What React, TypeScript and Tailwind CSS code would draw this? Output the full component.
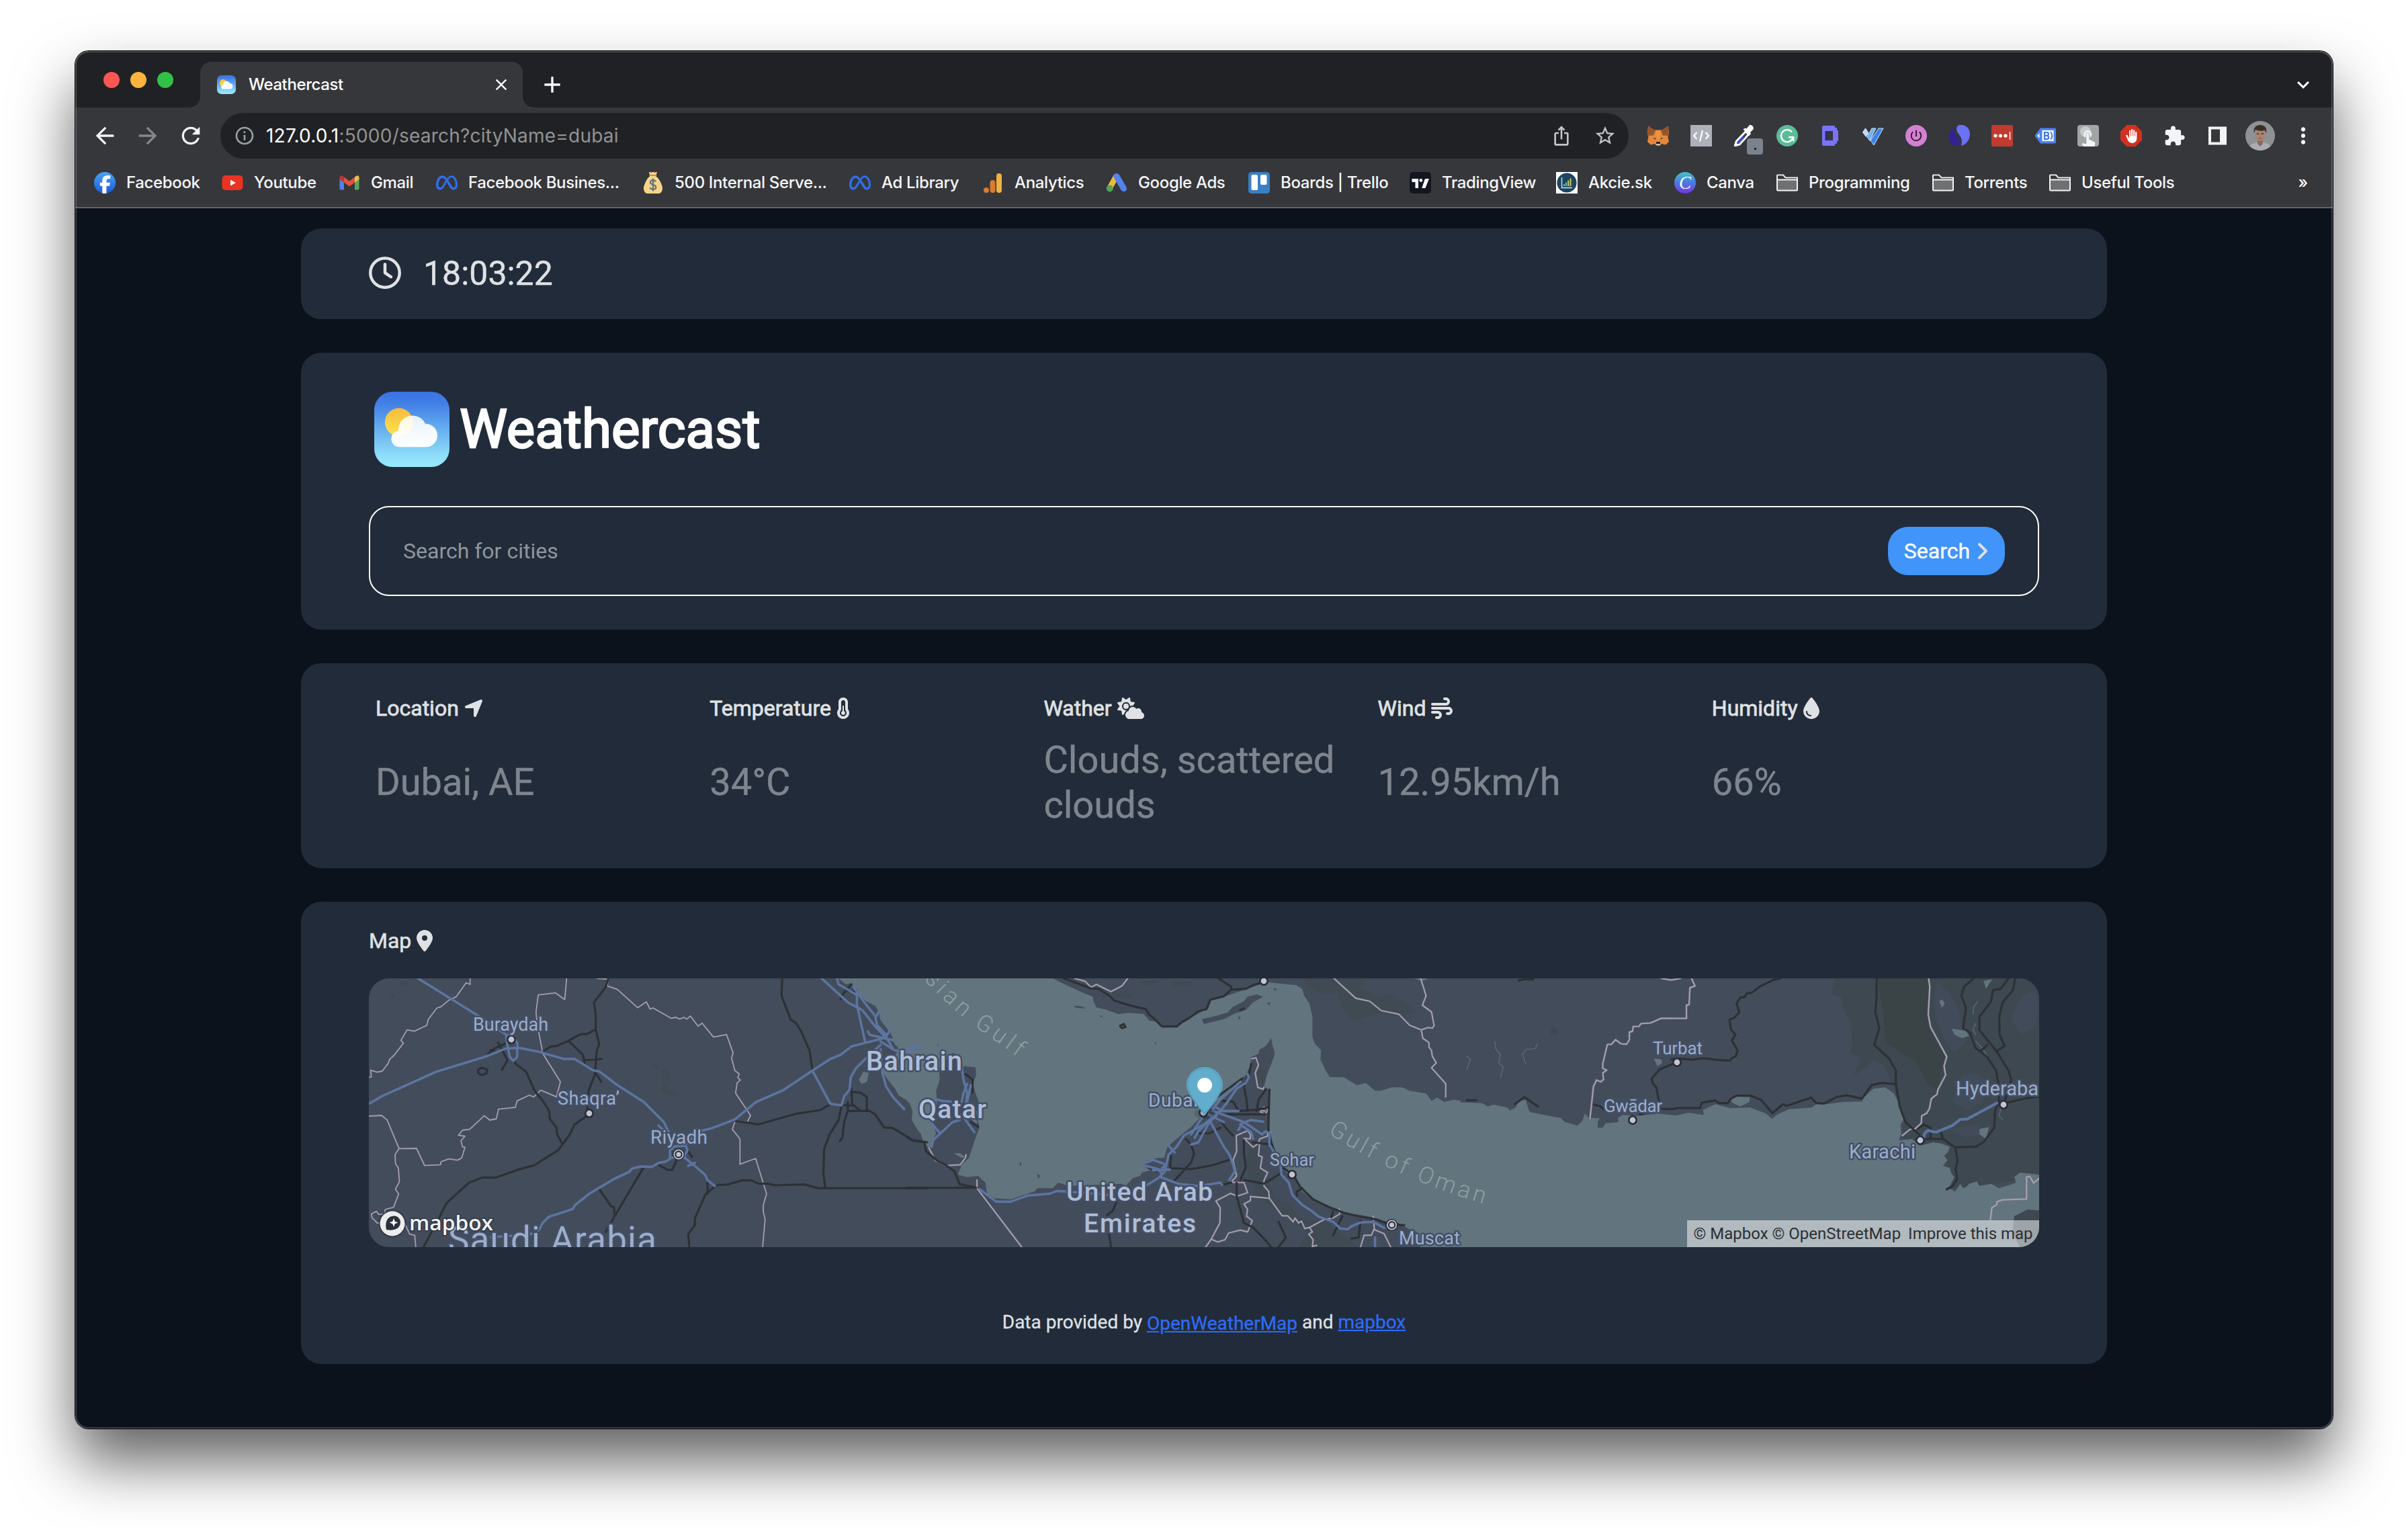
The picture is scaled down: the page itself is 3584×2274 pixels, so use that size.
import type { ReactNode } from 'react';
import { FaAngleRight, FaCloudSun, FaDroplet, FaFacebookF, FaLocationDot, FaMeta, FaRegClock, FaTemperatureHalf, FaWind } from 'react-icons/fa6';
import {
  MdAdd,
  MdArrowBack,
  MdArrowForward,
  MdBackHand,
  MdClose,
  MdExtension,
  MdInfoOutline,
  MdIosShare,
  MdKeyboardArrowDown,
  MdMoreVert,
  MdPowerSettingsNew,
  MdRefresh,
  MdStarBorder,
  MdTouchApp,
} from 'react-icons/md';

/* ---------- brand ---------- */

function WeatherLogo({ id, className }: { id: string; className: string }) {
  return (
    <svg viewBox="0 0 112 112" className={className}>
      <defs>
        <linearGradient id={`${id}-sky`} x1="0" y1="0" x2="0" y2="1">
          <stop offset="0" stopColor="#3a72e5" />
          <stop offset="0.15" stopColor="#417fe6" />
          <stop offset="0.85" stopColor="#8edef9" />
          <stop offset="1" stopColor="#98e8fd" />
        </linearGradient>
        <linearGradient id={`${id}-sun`} x1="0" y1="0" x2="0" y2="1">
          <stop offset="0" stopColor="#f6bb3e" />
          <stop offset="1" stopColor="#fde44c" />
        </linearGradient>
        <linearGradient id={`${id}-cloud`} x1="0" y1="0" x2="0" y2="1">
          <stop offset="0" stopColor="#fff" stopOpacity="0.86" />
          <stop offset="1" stopColor="#fff" stopOpacity="0.98" />
        </linearGradient>
      </defs>
      <rect width="112" height="112" rx="27" fill={`url(#${id}-sky)`} />
      <circle cx="36.8" cy="45.2" r="20.9" fill={`url(#${id}-sun)`} />
      <path
        d="M37.5 82.3A12.2 12.2 0 0 1 36 58A21 21 0 0 1 76 47.7A17.3 17.3 0 0 1 77.5 82.3Z"
        fill={`url(#${id}-cloud)`}
      />
    </svg>
  );
}

/* ---------- bookmark icons ---------- */

const icon = 'block h-8 w-8 shrink-0';

function FacebookIcon() {
  return (
    <span className="flex h-8 w-8 shrink-0 items-end justify-center overflow-hidden rounded-full bg-linear-to-b from-[#4aa3f7] to-[#2158d6]">
      <FaFacebookF className="h-[27px] w-[17px] text-white" />
    </span>
  );
}

function YoutubeIcon() {
  return (
    <svg viewBox="0 0 32 32" className={icon}>
      <rect x="0.5" y="5" width="31" height="22" rx="5" fill="#e93323" />
      <path d="M13 11.5v9l8-4.5z" fill="#fff" />
    </svg>
  );
}

function GmailIcon() {
  return (
    <svg viewBox="0 0 32 32" className={icon}>
      <path d="M1.500 9v15.500a2 2 0 0 0 2 2H8V13z" fill="#4d82ee" />
      <path d="M30.500 9v15.500a2 2 0 0 1-2 2H24V13z" fill="#57a55a" />
      <path d="M24 7.500l2-1.500c2-1.500 4.500-.3 4.500 2.500v2.500L24 15.500z" fill="#f2bd42" />
      <path d="M8 7.500L6 6C4 4.500 1.500 5.700 1.500 8.500V11L8 15.500z" fill="#b8372a" />
      <path d="M8 7.500l8 6 8-6v8l-8 6-8-6z" fill="#e0513f" />
    </svg>
  );
}

function MetaIcon() {
  return <FaMeta className="block h-8 w-8 shrink-0 text-[#2e6ff0]" />;
}

function MoneyBagIcon() {
  return (
    <svg viewBox="0 0 32 32" className={icon}>
      <path
        d="M10 0h2l1 1 2-1h2l2 1 1-1h2l-1.500 4.500v2c4 3 7 8 9 14.500 1.500 5-.5 11-5.500 11H8c-5 0-7-6-5.500-11C4.500 14.500 7 9.500 11 6.500v-2z"
        fill="#f6d588"
      />
      <path d="M10.500 4h11v1.800h-11z" fill="#c9804f" />
      <path
        d="M20 14.500c-.8-1.600-2.200-2.300-4-2.300-2.300 0-4 1.200-4 3.200 0 4.700 8.300 2.400 8.300 7 0 2.100-1.900 3.300-4.300 3.300-2.100 0-3.700-.9-4.400-2.600M16 9.700v18.600"
        fill="none"
        stroke="#64707c"
        strokeWidth="2.200"
      />
    </svg>
  );
}

function AnalyticsIcon() {
  return (
    <svg viewBox="0 0 32 32" className={icon}>
      <rect x="21" y="2" width="8" height="29" rx="4" fill="#f0b23e" />
      <rect x="11.500" y="12" width="8" height="19" rx="4" fill="#d97b33" />
      <circle cx="6" cy="27" r="4" fill="#d97b33" />
    </svg>
  );
}

function AdsIcon() {
  return (
    <svg viewBox="0 0 32 32" className={icon}>
      <path d="M15 7L5.500 24" stroke="#efb93a" strokeWidth="8.500" strokeLinecap="round" />
      <path d="M16 6.500L26.500 24.500" stroke="#5384ed" strokeWidth="9" strokeLinecap="round" />
      <circle cx="5.800" cy="24.500" r="5" fill="#55a456" />
    </svg>
  );
}

function TrelloIcon() {
  return (
    <svg viewBox="0 0 32 32" className={icon}>
      <rect width="32" height="32" rx="4.500" fill="#3a7fc4" />
      <rect x="4.500" y="4" width="9.500" height="23" rx="2" fill="#fff" />
      <rect x="18" y="4" width="9.500" height="15" rx="2" fill="#fff" />
    </svg>
  );
}

function TradingViewIcon() {
  return (
    <svg viewBox="0 0 32 32" className={icon}>
      <rect width="32" height="32" rx="5" fill="#14161f" />
      <path d="M3.500 10h9.500v14H8.500V15h-5z" fill="#fff" />
      <circle cx="16.800" cy="12.400" r="2.400" fill="#fff" />
      <path d="M23 10h6l-5.600 14h-5.200z" fill="#fff" />
    </svg>
  );
}

function AkcieIcon() {
  return (
    <svg viewBox="0 0 32 32" className={icon}>
      <rect width="32" height="32" fill="#fff" />
      <circle cx="16" cy="16" r="14.600" fill="#1c4560" />
      <path d="M8.500 8v15.500h15.500" fill="none" stroke="#d8e4ea" strokeWidth="1.400" />
      <path d="M12 21v-3" stroke="#63c3d8" strokeWidth="2" />
      <path d="M15 21v-5.500" stroke="#6fc08c" strokeWidth="2" />
      <path d="M18.200 21v-8.500" stroke="#c8cf6a" strokeWidth="2" />
      <path d="M21.500 21V9.500" stroke="#e2c45e" strokeWidth="2" />
    </svg>
  );
}

function CanvaIcon() {
  return (
    <span className="flex h-8 w-8 shrink-0 items-center justify-center rounded-full bg-linear-to-b from-[#45c1cc] via-[#4a78e0] to-[#6f2be6]">
      <span className="font-['Liberation_Serif'] text-[27px] leading-none text-white italic">C</span>
    </span>
  );
}

function FolderIcon() {
  return (
    <svg viewBox="0 0 32 32" className={icon}>
      <path d="M1 26.500V5.500a1 1 0 0 1 1-1h8l3.500 4H31v18a1 1 0 0 1-1 1H2a1 1 0 0 1-1-1z" fill="#6f7072" stroke="#f1f3f4" strokeWidth="2" />
      <path d="M2 5.500h7.500l3.500 4h17v2H2z" fill="#36373b" />
      <path d="M1 11.500h30" stroke="#f1f3f4" strokeWidth="2" />
    </svg>
  );
}

/* ---------- extension icons ---------- */

function FoxIcon() {
  return (
    <svg viewBox="0 0 32 32" className={icon}>
      <path d="M1 1.500l9 6h12l9-6 1 12-1.500 4L32 25l-5 4.500-6-1.500-2 2.500h-6L11 28l-6 1.500L0 25l1.500-7.500L0 13.500z" fill="#e5883a" />
      <path d="M1 1.500L12 8 9 15.500l-8 .5-1-2.500 1-4z" fill="#95552b" />
      <path d="M31 1.500L20 8l3 7.500 8 .5 1-2.500-1-4z" fill="#95552b" />
      <path d="M12 8h8l-2.500 13h-3z" fill="#ec9344" />
      <path d="M8.500 19l3.500.5.5 2.500zM23.500 19l-3.500.5-.5 2.500z" fill="#2a3540" />
      <path d="M12.500 25h7l-.5 4-1.500 1.500h-3L13 29z" fill="#c9bfb5" />
      <path d="M13.200 25h5.600l.4 3h-6.400z" fill="#1f2226" />
    </svg>
  );
}

function CodeIcon() {
  return (
    <svg viewBox="0 0 32 32" className={icon}>
      <rect width="32" height="32" fill="#aeb1ba" />
      <path d="M9.500 11L5 16l4.500 5M22.500 11l4.500 5-4.500 5M18 8l-4 16.500" fill="none" stroke="#fff" strokeWidth="2.200" />
    </svg>
  );
}

function EyedropperIcon() {
  return (
    <span className="relative block h-8 w-8">
      <svg viewBox="0 0 32 32" className={icon}>
        <path d="M18.500 9.500L4.500 24l-2 6.500L9 29l13.500-15z" fill="#36373b" stroke="#fff" strokeWidth="3.200" strokeLinejoin="round" />
        <path d="M13 17.500h5L8.500 27.500 5.500 28l.5-3.500z" fill="#3d4fd0" />
        <path d="M14.500 6.500l3-2 2 1 4-5c3-2 8 3 6 6l-4.500 4.500 1 2-2.500 3z" fill="#fff" />
      </svg>
      <span className="absolute top-5 left-5 flex h-6 w-6 items-center justify-center rounded bg-[#7c828d]">
        <span className="mt-1.5 h-[3px] w-[3px] bg-[#222]" />
      </span>
    </span>
  );
}

function GrammarlyIcon() {
  return (
    <svg viewBox="0 0 32 32" className={icon}>
      <circle cx="16" cy="16" r="16" fill="#5bbd98" />
      <path d="M23 10.500A9 9 0 1 0 24.500 19M18 18.300h7.200v6" fill="none" stroke="#fff" strokeWidth="2.400" />
    </svg>
  );
}

function DIcon() {
  return (
    <svg viewBox="0 0 32 32" className={icon}>
      <path d="M4 3.500A2.500 2.500 0 0 1 6.500 1H23v3h3v4h2v16h-2v4h-3v3H6.500A2.500 2.500 0 0 1 4 28.500z" fill="#7a73f5" />
      <rect x="11" y="9" width="9" height="14" fill="#36373b" />
      <rect x="8.500" y="9" width="3" height="14" fill="#2b2b73" />
    </svg>
  );
}

function StripesIcon() {
  return (
    <svg viewBox="0 0 32 32" className={icon}>
      <path d="M4.500 5L9 12 5.500 17.500.5 11z" fill="#b7dcf7" stroke="#d9ecfb" strokeWidth="1" />
      <path d="M14 5h6L11 23.500 7 18z" fill="#6db1f2" stroke="#cfe5fa" strokeWidth="1" />
      <path d="M24 5h7L17 30l-5-7z" fill="#3b82ee" stroke="#cfe5fa" strokeWidth="1" />
    </svg>
  );
}

function PowerIcon() {
  return (
    <span className="flex h-8 w-8 items-center justify-center rounded-full bg-[#d580d3]">
      <MdPowerSettingsNew className="h-[22px] w-[22px] text-[#26141f]" />
    </span>
  );
}

function SwirlIcon() {
  return (
    <svg viewBox="0 0 32 32" className={icon}>
      <path d="M9 3C-2 10-3 25 9 31c8 2 10-5 6-11C10 14 7 9 9 3z" fill="#32238f" />
      <path d="M16 0c-5 2-5 8-1 13 5 6 6 11 4 18 11-3 16-16 11-25C27 1 21-1 16 0z" fill="#6a72f6" />
    </svg>
  );
}

function PasswordIcon() {
  return (
    <svg viewBox="0 0 32 32" className={icon}>
      <rect width="32" height="32" rx="2.500" fill="#c03b2f" />
      <circle cx="6" cy="16" r="2.600" fill="#fff" />
      <circle cx="13.500" cy="16" r="2.600" fill="#fff" />
      <circle cx="21" cy="16" r="2.600" fill="#fff" />
      <path d="M27.500 10v12" stroke="#fff" strokeWidth="1.400" />
    </svg>
  );
}

function TagIcon() {
  return (
    <svg viewBox="0 0 32 32" className={icon}>
      <path d="M9 4.500h21a2 2 0 0 1 2 2v19a2 2 0 0 1-2 2H9L1 17v-2z" fill="#4b84ee" />
      <path d="M7.500 12.500v7L4 16z" fill="#fff" />
      <rect x="11.500" y="8" width="17" height="16" fill="#fff" />
      <path d="M15 11h3.500a2.400 2.400 0 0 1 0 4.800H15zM15 15.800h4a2.700 2.700 0 0 1 0 5.300h-4z" fill="none" stroke="#3f75dd" strokeWidth="2.200" />
      <path d="M24 10.500c3 2.500 3 8.500 0 11" fill="none" stroke="#3f75dd" strokeWidth="2" />
    </svg>
  );
}

function TouchIcon() {
  return (
    <span className="relative flex h-8 w-8 items-end justify-center overflow-hidden rounded bg-[#a3a5a5]">
      <span className="absolute top-0.5 left-1 h-4 w-4 rounded-full bg-[#c9cbcb]" />
      <MdTouchApp className="relative -mb-1 h-8 w-8 text-[#eef4fa]" />
    </span>
  );
}

function BlockIcon() {
  return (
    <span className="relative flex h-8 w-8 items-center justify-center">
      <svg viewBox="0 0 32 32" className="absolute inset-0 h-8 w-8">
        <path d="M9.500 0h13L32 9.500v13L22.500 32h-13L0 22.500v-13z" fill="#d3301f" />
      </svg>
      <MdBackHand className="relative h-[23px] w-[21px] text-white" />
    </span>
  );
}

function SidePanelIcon() {
  return (
    <svg viewBox="0 0 32 32" className={icon}>
      <rect x="3" y="2.500" width="27" height="27" fill="#f1f3f4" />
      <rect x="7" y="6.500" width="13" height="19" fill="#36373b" />
    </svg>
  );
}

function Avatar() {
  return (
    <svg viewBox="0 0 44 44" className="block h-11 w-11 overflow-hidden rounded-full">
      <rect width="44" height="44" fill="#8f9294" />
      <path d="M4 44c1-8 7-11 13-12h10c6 1 12 4 13 12z" fill="#a9acb3" />
      <path d="M18 26h8v8l-4 4-4-4z" fill="#8d6a59" />
      <ellipse cx="22" cy="20" rx="7.500" ry="10" fill="#a88371" />
      <path d="M13 18c-2-8 3-12 9-12s11 4 9 12l-2-4c-4 1-10 1-14-1z" fill="#3b2e27" />
      <path d="M17 19h3.500M23.500 19H27" stroke="#4a342a" strokeWidth="1.400" />
      <path d="M20 26h4" stroke="#7a4c40" strokeWidth="1" />
    </svg>
  );
}

/* ---------- browser chrome ---------- */

function TabStrip() {
  return (
    <div className="flex h-[84px] shrink-0 bg-[#202124]">
      <div className="flex w-[170px] gap-4 pt-[31px] pl-[42px]">
        <span className="h-6 w-6 rounded-full bg-[#fc5753]" />
        <span className="h-6 w-6 rounded-full bg-[#fdb43f]" />
        <span className="h-6 w-6 rounded-full bg-[#31c146]" />
      </div>
      <div className="flex items-end pt-4">
        <span className="h-4 w-4 bg-[radial-gradient(circle_at_0_0,#202124_15.500px,#36373b_16px)]" />
        <div className="flex h-[68px] w-[480px] items-center rounded-t-[16px] bg-[#36373b] pr-[18px] pl-[25px]">
          <WeatherLogo id="tab" className="h-7 w-7" />
          <span className="ml-[19px] grow text-2xl leading-7 font-medium tracking-[-0.4px] text-white">Weathercast</span>
          <MdClose className="h-7 w-7 text-white" />
        </div>
        <span className="h-4 w-4 bg-[radial-gradient(circle_at_100%_0,#202124_15.500px,#36373b_16px)]" />
      </div>
      <div className="flex grow items-center justify-between pt-4 pr-[26px] pl-[8px]">
        <MdAdd className="h-10 w-10 text-white" />
        <MdKeyboardArrowDown className="h-9 w-9 text-white" />
      </div>
    </div>
  );
}

const extensions: ReactNode[] = [
  <FoxIcon />,
  <CodeIcon />,
  <EyedropperIcon />,
  <GrammarlyIcon />,
  <DIcon />,
  <StripesIcon />,
  <PowerIcon />,
  <SwirlIcon />,
  <PasswordIcon />,
  <TagIcon />,
  <TouchIcon />,
  <BlockIcon />,
  <MdExtension className="h-[33px] w-[33px] text-[#f1f3f4]" />,
  <SidePanelIcon />,
  <Avatar />,
  <MdMoreVert className="h-[38px] w-[38px] text-[#f1f3f4]" />,
];

function Toolbar() {
  return (
    <div className="flex h-[84px] shrink-0 items-center bg-[#36373b]">
      <div className="flex items-center gap-6 pl-6">
        <MdArrowBack className="h-10 w-10 text-[#f1f3f4]" />
        <MdArrowForward className="h-10 w-10 text-[#85878a]" />
        <MdRefresh className="h-10 w-10 text-[#f1f3f4]" />
      </div>
      <div className="ml-6 flex h-[68px] w-[2096px] items-center rounded-full bg-[#202124] pr-[18px] pl-5">
        <MdInfoOutline className="h-8 w-8 text-[#9aa0a6]" />
        <span className="ml-4 grow text-[28px] leading-8 tracking-[0.22px] text-[#929395]">
          <span className="text-white">127.0.0.1</span>:5000/search?cityName=dubai
        </span>
        <MdIosShare className="h-8 w-8 text-[#c4c5c7]" />
        <MdStarBorder className="ml-8 h-[34px] w-[34px] text-[#c4c5c7]" />
      </div>
      <div className="ml-3 flex">
        {extensions.map((ext, i) => (
          <div key={i} className="flex w-16 items-center justify-center">
            {ext}
          </div>
        ))}
      </div>
    </div>
  );
}

const bookmarks: { label: string; icon: ReactNode; width: string }[] = [
  { label: 'Facebook', icon: <FacebookIcon />, width: 'w-[190px]' },
  { label: 'Youtube', icon: <YoutubeIcon />, width: 'w-[174px]' },
  { label: 'Gmail', icon: <GmailIcon />, width: 'w-[145px]' },
  { label: 'Facebook Busines...', icon: <MetaIcon />, width: 'w-[307px]' },
  { label: '500 Internal Serve...', icon: <MoneyBagIcon />, width: 'w-[308px]' },
  { label: 'Ad Library', icon: <MetaIcon />, width: 'w-[198px]' },
  { label: 'Analytics', icon: <AnalyticsIcon />, width: 'w-[184px]' },
  { label: 'Google Ads', icon: <AdsIcon />, width: 'w-[212px]' },
  { label: 'Boards | Trello', icon: <TrelloIcon />, width: 'w-[240px]' },
  { label: 'TradingView', icon: <TradingViewIcon />, width: 'w-[218px]' },
  { label: 'Akcie.sk', icon: <AkcieIcon />, width: 'w-[176px]' },
  { label: 'Canva', icon: <CanvaIcon />, width: 'w-[152px]' },
  { label: 'Programming', icon: <FolderIcon />, width: 'w-[232px]' },
  { label: 'Torrents', icon: <FolderIcon />, width: 'w-[174px]' },
  { label: 'Useful Tools', icon: <FolderIcon />, width: 'w-[220px]' },
];

function BookmarksBar() {
  return (
    <div className="flex h-[66px] shrink-0 items-center border-b-2 border-[#5f6064] bg-[#36373b] pr-[37px] pb-2 pl-7">
      <div className="flex grow">
        {bookmarks.map((b) => (
          <div key={b.label} className={`flex shrink-0 items-center gap-4 ${b.width}`}>
            {b.icon}
            <span className="text-2xl leading-8 font-medium tracking-[-0.35px] whitespace-nowrap text-[#f5f6f7]">{b.label}</span>
          </div>
        ))}
      </div>
      <span className="text-2xl leading-8 font-medium text-white">»</span>
    </div>
  );
}

/* ---------- map artwork ---------- */

const toPath = (lines: string[]) => lines.map((l) => `M${l}`).join('');

function Lines({ lines, color, width }: { lines: string[]; color: string; width: number }) {
  return (
    <path
      d={toPath(lines)}
      fill="none"
      stroke={color}
      strokeWidth={width}
      strokeLinejoin="round"
      strokeLinecap="round"
      vectorEffect="non-scaling-stroke"
    />
  );
}

const WEST = 'matrix(.5421 0 0 .33333 -19 -16)';
const CENTER = 'matrix(.5421 0 0 .33333 801 -16)';
const EAST = 'matrix(.574 0 0 .33333 1631 -16)';

const gulf =
  '-188,48 -168,75 -155,70 -138,95 -128,125 -113,150 -88,170 -78,195 -73,235 -58,265 -43,300 -35,340 -23,360 -33,395 -63,420 -73,450 -53,500 -33,540 -23,570 -3,590 7,605 15,640 13,680 27,720 37,740 48,790 60,805 72,798 70,770 80,740 70,690 80,650 82,600 80,550 90,500 88,460 100,420 118,400 125,380 150,400 152,440 188,445 190,480 180,520 188,560 197,600 190,650 199,715 188,760 180,800 170,850 150,880 140,925 165,935 195,930 215,960 220,1010 240,1030 285,1035 320,1015 350,1000 358,985 400,985 415,960 445,975 590,965 600,975 620,940 640,930 645,915 668,905 652,885 660,860 690,850 706,850 715,800 755,745 778,715 805,670 850,600 880,560 900,515 930,480 942,440 945,400 965,385 968,365 985,350 1000,315 1003,345 1010,385 1000,430 988,480 980,530 995,545 995,720 1003,790 1015,840 1028,885 1045,920 1070,950 1085,1000 1120,1045 1185,1085 1200,1098 1235,1102 1280,1115 1310,1130 1340,1135 1360,1150 1375,1165 1400,1180 1410,1248 1520,1248 1520,595 1500,590 1475,600 1455,580 1440,595 1425,562 1380,550 1360,535 1330,535 1300,550 1285,550 1260,515 1235,525 1200,490 1160,488 1148,455 1135,410 1137,370 1120,340 1113,310 1113,220 1105,160 1090,125 1085,95 1068,78 1045,75 990,65 970,75 940,90 915,105 880,125 835,145 828,180 800,205 765,235 742,265 705,267 690,242 665,237 650,207 610,202 580,208 545,187 520,178 512,150 510,130 480,110 440,80 400,48Z';

const arabianSea =
  '-60,600 0,602 45,605 60,620 75,612 110,625 117,638 132,625 140,595 158,590 166,635 170,645 250,672 258,688 292,706 305,685 312,650 322,672 350,672 345,690 345,715 358,715 365,695 398,690 398,670 410,658 450,662 500,652 548,660 580,648 620,658 618,635 650,610 690,628 740,625 780,650 797,675 812,655 840,632 900,625 912,608 940,610 980,600 1030,598 1035,580 1060,540 1090,535 1112,560 1125,600 1132,640 1138,680 1130,700 1132,740 1126,772 1160,765 1180,795 1215,780 1235,785 1258,800 1253,825 1243,840 1252,860 1240,885 1258,895 1262,920 1270,935 1262,960 1255,985 1272,1000 1285,965 1292,985 1300,980 1308,965 1328,955 1335,975 1365,965 1385,985 1410,972 1430,960 1425,935 1440,915 1492,925 1492,1248 -60,1248Z';

const centerIslands = [
  '810,230 850,215 880,200 895,175 925,150 935,130 960,120 978,130 950,155 930,190 900,205 870,230 815,252Z',
  '457,170 480,173 490,182 465,180Z',
  '528,213 538,218 533,222Z',
  '908,225 915,215 914,232Z',
  '1005,95 1015,92 1012,105Z',
  '988,158 998,155 995,168Z',
  '309,865 315,880 310,885Z',
  '357,920 366,930 360,942Z',
  '680,330 685,340 681,342Z',
  '83,340 87,345 84,350Z',
];

const westBorders = [
  '313,48 313,75 302,68 275,130 255,145 233,175 222,180 198,232 194,258 160,284 140,278 123,325 130,337 105,390 92,410 88,428 72,462 58,467 40,458 42,488 35,490',
  '578,48 573,143 548,113 500,122 494,200 498,260 513,385 561,510 550,577 507,547 488,577 475,570 442,595 437,624 391,632 385,675 367,681 352,661 312,722 292,726 281,749 299,753 288,773 292,800 299,802 290,850 278,860 255,854 233,867 232,880 188,884 166,807 118,808 85,680 70,660 35,663',
  '118,808 107,835 108,875 116,895 119,955 108,990 117,1010 103,1070 80,1080 78,1100 62,1102 56,1088 42,1100 44,1118 58,1140 135,1147 147,1190 161,1195 164,1248',
  '662,48 692,52 690,82 717,97 773,179 797,153 807,185 815,180 865,226 878,222 888,230 900,222 908,230 918,216 939,262 950,248 981,310 1017,299 1035,380 1031,405 1040,460 1052,475 1048,490 1055,502 1046,515 1042,560 1083,660 1074,690 1041,684 1033,722 1054,765 1054,878 1097,852 1127,1010 1118,1060 1118,1090 1123,1125 1116,1248',
];

const westMotorways = [
  '170,48 340,220 412,300',
  '35,608 70,575 220,465 360,395 410,362 445,358 500,375 570,408 600,408 650,458 668,464 715,522 790,600 845,690 860,740 862,790',
  '412,300 415,345 422,400 432,416 442,400 443,340 430,300 415,300',
  '830,705 850,735',
  '875,798 862,815 862,845 873,850 900,845 910,815 905,795Z',
  '1448,315 1360,352 1330,390 1302,408 1253,460 1172,548 1098,600 1040,678 975,718 940,732 905,790',
  '895,840 930,885 958,925 965,950 985,975',
  '912,885 930,872',
  '865,850 850,866 830,872 812,890 780,888 757,898 750,912 710,942 640,1010 600,1062 595,1078 530,1112 512,1140 503,1170 490,1187 420,1198 370,1205',
  '1253,460 1302,608 1333,615 1340,575 1355,545 1358,490 1372,450 1400,405 1440,345',
  '1278,48 1350,155 1390,190 1425,262 1450,305',
  '1320,48 1325,75 1375,122 1375,165 1398,335',
  '1365,85 1380,120 1400,165 1425,215 1430,255 1455,300',
  '1430,215 1435,195 1445,205',
  '1405,285 1410,300 1475,325',
  '1470,265 1455,310 1475,365 1440,330',
  '1515,370 1550,352',
  '1480,370 1520,372 1524,388',
  '1440,365 1445,470 1455,530 1475,580 1505,632',
];

const westRoads = [
  '692,52 685,88 653,155 658,210 658,275 667,340 660,380 658,430 655,480 638,550 635,630',
  '658,275 635,296 615,298 583,327 550,350 535,352 515,372',
  '583,327 622,388 628,428',
  '625,413 675,408',
  '655,462 673,510',
  '435,415 438,430 467,465 490,550 515,600 530,640 532,675 550,715 552,745 566,787',
  '640,655 600,700 585,750 555,815 490,882 445,902 385,937 348,937 310,960 248,1052 230,1110 185,1248',
  '425,330 380,360 363,385',
  '335,455 345,447 360,455 358,472 345,480 335,470Z',
  '415,415 400,458',
  '390,335 415,410',
  '365,385 370,368 380,370',
  '1170,48 1168,125 1193,232 1208,248 1222,285 1245,370 1253,460',
  '1040,684 1105,700 1210,652 1275,636 1302,610',
  '1333,615 1325,680 1300,745 1285,810 1283,920 1288,980',
  '1350,600 1350,640 1410,640 1425,655 1450,715 1472,715 1528,770 1568,780',
  '1360,555 1385,558 1402,578 1402,640',
  '1360,540 1362,610 1385,640',
  '1335,615 1365,615',
  '1350,640 1340,690 1335,760 1328,775',
  '1568,985 1270,985 1230,968 1150,972 1130,965 1105,965 1085,950 1060,950 1020,968 990,972 960,1010 930,1120 930,1150 912,1190 915,1248',
  '965,950 965,1010',
  '790,890 710,1110 685,1180',
  '668,990 700,1065 708,1070 710,1110',
  '880,860 868,903 855,903 832,882',
  '910,815 922,845',
  '1360,75 1340,110 1330,140',
  '1345,100 1370,110',
];

const centerBorders = [
  '460,48 490,62 505,88 520,75 560,107 590,82 606,48',
  '1172,48 1232,137 1270,150 1302,192 1350,208 1380,257 1412,278 1430,268 1443,270 1447,258 1440,198 1415,168 1425,125 1410,48',
  '1412,278 1416,315 1433,335 1433,355 1440,370 1442,395 1453,425 1440,447 1479,518 1479,578',
  '60,805 78,862 108,884 146,880 160,850 162,835',
  '192,948 192,985 315,1248',
  '947,407 958,402 965,435 956,470 963,535 977,543 980,535',
  '970,645 980,622 991,635 983,655Z',
  '977,640 983,640',
  '904,750 935,728 943,745 942,765 925,762 950,802 965,785 968,765 990,752 990,735 998,735',
  '904,750 905,820 895,860 905,930 890,958 925,960 935,1005 907,1020 888,1008 848,1042 860,1072 859,1140 835,1213 853,1225 873,1215 883,1185 915,1172 935,1180 948,1130 932,1110 935,1080 925,1055 943,1040 943,1022 995,1030 1030,1108 1045,1108 1060,1135 1065,1118 1075,1140 1083,1132 1092,1165 1105,1160 1113,1180 1103,1190 1115,1215 1113,1245 1125,1240',
  '835,1213 820,1248',
  '968,785 965,840 975,845 970,895 990,915 980,950 980,975 993,1000 995,1030',
  '1105,1160 1145,1125 1170,1118 1188,1100 1187,1077',
  '1280,1110 1283,1165 1275,1195 1255,1195 1245,1248',
  '1283,1170 1310,1188 1328,1248',
];

const centerMotorways = [
  '935,475 938,490 930,515 905,540 880,600 860,640 815,700 760,750 740,800 718,835 708,910 690,940 660,970',
  '915,510 860,590 840,630',
  '810,670 780,745',
  '825,690 800,730 790,760',
  '845,620 865,640 910,640',
  '840,640 900,675 925,690 975,745 985,730',
  '820,650 870,690',
  '830,680 870,800 885,835 895,880 900,910 885,948',
  '910,725 920,695 945,680 978,688',
  '915,700 945,735 950,765',
  '850,660 830,690 800,780 780,790',
  '695,935 745,965 770,970 800,975 860,960 865,970',
  '658,870 675,858 712,880 700,895',
  '675,905 722,902',
  '655,885 690,900 700,920',
  '715,790 735,825',
  '200,990 245,1045 285,1045 330,1018 390,1010 412,997 440,1000 500,1008 560,1015',
  '995,735 995,790 1025,870 1028,925 1048,960 1058,1015 1085,1060 1110,1085 1130,1112 1170,1135 1190,1165 1210,1168 1220,1155 1245,1138 1280,1135 1310,1162',
  '1285,1205 1285,1248',
  '150,440 155,500 165,560 160,640 190,690',
  '175,525 165,600 175,660',
  '165,520 155,560 150,600',
  '75,585 95,595 120,598',
  '62,685 90,738',
  '45,600 60,590 65,640',
  '150,655 165,690 185,735',
  '145,680 125,690 72,770 68,800',
  '0,365 20,355 38,352',
];

const centerRoads = [
  '430,48 505,93 525,95 555,125 570,148 600,163 635,178 655,185 665,210 683,235 700,263 740,263 755,243 775,225 800,195 822,185 833,143 870,128 890,98 930,95 955,75 980,65',
  '855,48 890,85 890,98',
  '920,495 870,555 850,580',
  '945,430 940,470 925,530 932,590 935,640',
  '985,545 965,590 960,640',
  '865,595 895,598 910,640',
  '910,640 960,635 990,625',
  '870,655 910,655 985,655',
  '995,545 992,720 1000,780 1015,850 1030,890 1060,925 1080,980 1115,1035 1160,1070 1200,1095 1240,1110 1290,1125 1320,1145',
  '765,765 780,790 788,830 780,870 735,950',
  '725,895 780,900 840,882 885,858',
  '725,840 722,900',
  '860,680 875,715 895,750',
  '795,740 830,740 860,715',
  '925,770 925,830 930,890 915,950',
  '905,960 905,1020 925,1140 950,1160 980,1210 1000,1248',
  '925,948 980,965 1025,920',
  '950,780 1000,790',
  '865,970 890,960',
  '1020,1135 1040,1205 1020,1248',
  '1085,985 1070,1000 1070,1020',
  '1170,1090 1165,1115',
  '1195,1110 1170,1195',
  '1245,1130 1240,1205 1220,1210',
  '1325,1145 1365,1150',
  '575,1045 565,1085 550,1105',
  '555,1150 555,1190 560,1248',
  '0,757 15,772 48,780 52,820 85,865 105,880 130,910 145,968 185,980',
  '0,983 190,983',
  '160,475 180,500 180,560',
  '175,690 195,710',
  '585,260 595,252 600,265 590,270Z',
  '915,190 925,182',
  '655,885 665,895 685,910',
];

const eastBorders = [
  '510,48 535,56 560,48',
  '588,48 597,82 584,90 582,165 575,168 575,227 510,226 482,247 457,250 452,263 437,263 435,285 427,288 427,322 420,342 405,340 391,322 380,343 370,343 358,430 358,450 368,458 358,470 360,500 353,510 342,502 334,530 325,672',
  '1203,48 1206,85 1202,210 1208,265 1250,398 1243,440 1247,480 1227,545 1225,565 1210,585 1205,630 1198,650 1185,662 1184,695 1168,720 1155,722 1135,750',
  '1490,940 1475,962 1465,932 1457,935 1457,1033 1395,1037 1380,1045 1380,1058 1367,1072 1363,1125',
];

const eastRoads = [
  '820,48 800,55 765,85 745,112 732,115 725,133 715,133 705,160 712,200 698,225 687,232 690,275 702,300 693,325 708,370 703,395 692,405 688,415 655,412 620,405 590,411 560,407 535,410',
  '540,430 505,455 485,495 487,515 497,535 503,590 505,630 540,632 550,627 610,627 615,603 650,593 658,605 682,605 690,585 705,572 743,572 768,590 798,650 825,610 835,617 890,585 898,580 912,605 932,607 965,577 990,570 1030,585 1055,525 1080,515 1117,520',
  '1068,48 1068,130 1065,200 1075,270 1062,345 1100,405 1118,460 1118,520 1128,620 1143,690 1178,745',
  '1320,48 1295,85 1288,125 1300,180 1292,270 1310,290 1325,360 1355,400 1378,460 1385,530 1385,600 1375,640 1373,715 1345,780 1325,800 1272,802 1240,765 1195,765',
  '1410,48 1390,95 1370,100 1365,150 1335,220 1335,280 1380,375 1410,460 1417,500 1400,600',
  '1427,48 1422,100 1395,155 1386,220 1387,300 1400,350 1378,375',
  '1355,345 1340,370',
  '1490,575 1450,585 1410,602',
  '1175,720 1190,700 1208,715 1208,765',
  '1235,735 1240,765',
  '1272,802 1278,860 1273,900 1277,945 1265,975 1250,990',
  '130,610 155,578 190,620',
  '335,612 350,618 362,635',
  '5,592 30,592',
  '140,58 155,52 178,52',
  '455,655 470,648',
];

const eastMotorways = ['1190,760 1192,742 1200,727 1222,735 1265,705 1285,678 1303,676 1380,605'];

const rivers = [
  '78,330 80,360 93,390 88,425 100,445 93,490',
  '188,342 183,362 160,365 150,385 158,430',
  '5,395 15,410 5,455',
  '1330,152 1320,175 1318,205',
  '1325,250 1318,275 1325,300',
  '1325,330 1340,355 1355,395',
  '1393,620 1385,660 1395,680',
];

const vegetation = [
  '960,48 950,120 975,130 985,200 1000,240 1005,330 1000,380 1025,400 1010,480 1045,440 1060,410 1090,440 1110,520 1130,620 1140,690 1132,760 1180,790 1250,800 1245,880 1268,930 1262,985 1300,975 1370,965 1430,950 1430,920 1492,920 1492,48Z',
];

const vegetationGaps = [
  '1225,60 1260,120 1285,200 1290,270 1300,330 1270,380 1250,340 1225,250 1215,150Z',
  '1450,120 1480,100 1490,180 1480,260 1445,300 1415,230Z',
  '1290,480 1330,470 1360,520 1340,600 1300,640 1265,600Z',
  '1250,720 1330,700 1360,740 1300,760Z',
];

const denseVegetation = [
  '1070,48 1205,48 1200,210 1210,270 1245,400 1225,545 1200,520 1170,420 1130,380 1090,330 1085,200Z',
];

const centerHills = [
  '1090,48 1260,48 1245,90 1290,130 1330,120 1380,170 1400,200 1360,215 1300,200 1225,240 1200,190 1180,110 1150,120 1100,90Z',
  '640,60 690,55 680,80 640,75Z',
  '725,65 775,60 780,80 735,85Z',
  '560,108 615,120 620,135 575,130Z',
  '960,440 985,460 980,520 965,500Z',
  '945,770 965,790 970,900 985,950 950,960 930,900Z',
  '950,965 1000,970 1005,1030 1060,1060 1070,1110 1110,1130 1150,1130 1180,1180 1240,1248 1075,1248 1100,1180 1040,1110 960,1020Z',
];

const westHills = [
  '120,58 140,60 138,85 115,85Z',
  '98,118 106,118 104,138 93,134Z',
  '812,427 828,438 828,455Z',
  '840,455 858,462 866,508 840,495Z',
  '845,515 862,550 885,558 885,572 850,570 838,545Z',
  '732,497 752,515 745,525Z',
];

type Label = { text: string; x: number; y: number; width: number; size: number; weight?: number };

const labels: Label[] = [
  { text: 'Buraydah', x: 155, y: 78, width: 112, size: 27 },
  { text: 'Shaqra’', x: 281, y: 188, width: 92, size: 27 },
  { text: 'Riyadh', x: 419, y: 246, width: 85, size: 28 },
  { text: 'Saudi Arabia', x: 118, y: 407, width: 310, size: 53 },
  { text: 'Bahrain', x: 740, y: 137, width: 143, size: 40, weight: 500 },
  { text: 'Qatar', x: 818, y: 208, width: 101, size: 39, weight: 500 },
  { text: 'United Arab', x: 1038, y: 331, width: 218, size: 39, weight: 500 },
  { text: 'Emirates', x: 1064, y: 378, width: 167, size: 39, weight: 500 },
  { text: 'Dubai', x: 1160, y: 191, width: 74, size: 28 },
  { text: 'Sohar', x: 1341, y: 279, width: 66, size: 25 },
  { text: 'Muscat', x: 1533, y: 396, width: 91, size: 27 },
  { text: 'Turbat', x: 1911, y: 113, width: 74, size: 26 },
  { text: 'Gwādar', x: 1838, y: 199, width: 87, size: 26 },
  { text: 'Hyderaba', x: 2362, y: 174, width: 123, size: 29 },
  { text: 'Karachi', x: 2203, y: 268, width: 99, size: 29 },
];

const towns: [number, number][] = [
  [212, 91],
  [328, 201],
  [1242, 200],
  [1374, 292],
  [1332, 4],
  [1947, 125],
  [1881, 211],
  [2309, 241],
  [2433, 188],
];

const capitals: [number, number][] = [
  [461, 262],
  [1522.5, 367],
];

function MapArtwork() {
  const land = '#434c5b';
  const water = '#62747d';
  const border = '#a49db0';
  const road = '#2d3136';
  const motorway = '#5c749f';
  return (
    <svg viewBox="0 0 2486 400" className="block h-[400px] w-[2486px] font-['Roboto']">
      <rect width="2486" height="400" fill={land} />
      <g transform={EAST}>
        <path d={toPath(vegetation)} fill="#3e4850" />
        <path d={toPath(vegetationGaps)} fill="#424b59" />
        <path d={toPath(denseVegetation)} fill="#3a4446" />
        <path d={`M${arabianSea}`} fill={water} />
        <path d="M1425,1110 1460,1080 1492,1085 1492,1248 1440,1248 1420,1180Z" fill="#3e4850" />
        <path
          d="M490,405 510,410 512,425 500,442Z M690,590 705,575 740,578 738,600 715,620 695,605Z M1263,272 1300,282 1308,305 1290,315 1270,300Z M1345,60 1368,52 1360,72 1352,95Z M1230,150 1238,142 1245,160 1238,180Z M1335,720 1360,712 1355,740 1355,770 1335,745Z"
          fill={water}
        />
        <path d="M225,262 242,275 240,300 222,300Z" fill="#3f4852" />
        <Lines lines={rivers} color="#5a6b76" width={1.4} />
        <Lines lines={eastBorders} color={border} width={2.4} />
        <Lines lines={eastRoads} color={road} width={3.2} />
        <Lines lines={eastMotorways} color={motorway} width={4.2} />
      </g>
      <g transform={CENTER}>
        <path d={toPath(centerHills)} fill="#404a53" />
        <path d={`M${gulf}`} fill={water} />
        <path d={toPath(centerIslands)} fill={land} />
        <path d="M-120,465 -105,470 -110,510 -125,520 -132,500Z M128,830 145,828 160,845 150,850Z M1392,48 1432,48 1415,60Z" fill={water} />
      </g>
      <g transform={WEST}>
        <path d={toPath(westHills)} fill="#404a53" />
        <Lines lines={westBorders} color={border} width={1.8} />
        <Lines lines={westRoads} color={road} width={3.2} />
        <Lines lines={westMotorways} color={motorway} width={3.6} />
      </g>
      <g transform={CENTER}>
        <Lines lines={centerBorders} color={border} width={2.2} />
        <Lines lines={centerRoads} color={road} width={3.2} />
        <Lines lines={centerMotorways} color={motorway} width={3.6} />
      </g>

      <path id="persian-gulf" d="M826 2Q878 56 908 76T990 136" fill="none" />
      <path id="gulf-of-oman" d="M1427 230Q1540 305 1690 344" fill="none" />
      <g fill="#8a9fa3" fontSize="35" fontWeight="300">
        <text>
          <textPath href="#persian-gulf" textLength="182">
            sian Gulf
          </textPath>
        </text>
        <text>
          <textPath href="#gulf-of-oman" textLength="256">
            Gulf of Oman
          </textPath>
        </text>
      </g>

      {towns.map(([x, y]) => (
        <g key={`${x}-${y}`}>
          <circle cx={x} cy={y} r="7" fill="#272c3c" />
          <circle cx={x} cy={y} r="4.400" fill="#c3c4cc" />
        </g>
      ))}
      {capitals.map(([x, y]) => (
        <g key={`${x}-${y}`}>
          <circle cx={x} cy={y} r="9" fill="#272c3c" />
          <circle cx={x} cy={y} r="6.600" fill="none" stroke="#c3c4cc" strokeWidth="1.800" />
          <circle cx={x} cy={y} r="3.600" fill="#c3c4cc" />
        </g>
      ))}

      {labels.map((l) => (
        <text
          key={l.text}
          x={l.x}
          y={l.y}
          fontSize={l.size}
          fontWeight={l.weight ?? 400}
          textLength={l.width}
          lengthAdjust="spacing"
          fill={l.weight ? '#b0bdd6' : '#9dadca'}
          stroke="#435068"
          strokeWidth="5"
          strokeLinejoin="round"
          paintOrder="stroke"
        >
          {l.text}
        </text>
      ))}
    </svg>
  );
}

function MapPin() {
  return (
    <svg viewBox="0 0 27 41" className="absolute top-[132px] left-[1217px] h-[82px] w-[54px]">
      <ellipse cx="13.500" cy="34.500" rx="8" ry="4" fill="#000" opacity="0.120" />
      <path
        d="M27 13.500C27 19.070 20.250 27 14.750 34.500C14.020 35.500 12.980 35.500 12.250 34.500C6.750 27 0 19.220 0 13.500C0 6.040 6.040 0 13.500 0C20.960 0 27 6.040 27 13.500Z"
        fill="#62adcb"
      />
      <path
        d="M26 13.500C26 20.530 14.530 33.660 13.500 34.500C12.470 33.660 1 20.530 1 13.500C1 6.600 6.600 1 13.500 1S26 6.600 26 13.500Z"
        fill="none"
        stroke="#4f9cba"
        strokeWidth="0.600"
      />
      <circle cx="13.500" cy="13.500" r="5.500" fill="#fff" />
    </svg>
  );
}

function MapboxWordmark() {
  return (
    <svg viewBox="0 0 176 44" className="absolute bottom-[13px] left-[13px] h-11 w-[176px] font-['Open_Sans']">
      <circle cx="22" cy="22" r="20.500" fill="#2b313a" opacity="0.750" />
      <circle cx="22" cy="22" r="18.500" fill="#ececed" />
      <path d="M13 31c-2-9 0-20 11.500-20.500C30 10.500 34 15 34 20.500 33 31 22 33 13 31z" fill="#2b313a" />
      <path d="M24 14l1.700 4.800 4.800 1.700-4.800 1.700L24 27l-1.700-4.800-4.800-1.700 4.800-1.700z" fill="#fff" />
      <text
        x="47"
        y="32"
        fontSize="31"
        fontWeight="600"
        textLength="125"
        lengthAdjust="spacingAndGlyphs"
        fill="#f1f2f4"
        stroke="#2f3742"
        strokeWidth="3"
        strokeLinejoin="round"
        paintOrder="stroke"
      >
        mapbox
      </text>
    </svg>
  );
}

/* ---------- weather page ---------- */

function LocationArrow() {
  return (
    <svg viewBox="0 0 448 512" className="h-8 w-7 fill-current">
      <path d="M429.600 92.100c4.900-11.900 2.100-25.600-7-34.700s-22.800-11.900-34.700-7l-352 144c-14.200 5.800-22.200 20.800-19.300 35.800s16.100 25.800 31.400 25.800H224V432c0 15.300 10.800 28.400 25.800 31.400s30-5.100 35.800-19.300l144-352z" />
    </svg>
  );
}

const readings: { label: string; value: string; icon: ReactNode }[] = [
  { label: 'Location', value: 'Dubai, AE', icon: <LocationArrow /> },
  { label: 'Temperature', value: '34°C', icon: <FaTemperatureHalf className="h-8 w-5" /> },
  { label: 'Wather', value: 'Clouds, scattered clouds', icon: <FaCloudSun className="h-8 w-10" /> },
  { label: 'Wind', value: '12.95km/h', icon: <FaWind className="h-8 w-8" /> },
  { label: 'Humidity', value: '66%', icon: <FaDroplet className="h-8 w-6" /> },
];

function Card({ className, children }: { className: string; children: ReactNode }) {
  return <section className={`w-[2688px] shrink-0 rounded-[30px] bg-[#222b39] px-[101px] ${className}`}>{children}</section>;
}

function WeatherPage() {
  return (
    <main className="flex grow flex-col items-center gap-[50px] bg-[#0b121b] pt-[30px] font-['Roboto'] text-[#dfe1e4]">
      <Card className="flex h-[135px] items-center gap-[33px]">
        <FaRegClock className="mb-1 h-12 w-12" />
        <span className="mb-0.5 text-[50px] leading-[60px] [-webkit-text-stroke:0.4px]">18:03:22</span>
      </Card>

      <Card className="h-[412px] pt-[58px]">
        <div className="flex items-center gap-[15px] pl-[8px]">
          <WeatherLogo id="brand" className="h-28 w-28" />
          <h1 className="text-[80px] leading-[96px] font-normal text-white [-webkit-text-stroke:2.400px_white]">Weathercast</h1>
        </div>
        <div className="mt-[58px] flex h-[134px] items-center justify-between rounded-[30px] border-2 border-white px-[49px]">
          <span className="text-[32px] leading-10 text-[#8f969f]">Search for cities</span>
          <button className="flex h-[72px] w-[174px] items-center justify-center gap-2 rounded-[30px] bg-[#4094fa] text-[32px] text-white [-webkit-text-stroke:0.4px]">
            Search
            <FaAngleRight className="h-8 w-5 text-[#dcdfe3]" />
          </button>
        </div>
      </Card>

      <Card className="grid h-[305px] grid-cols-5 pt-[47px]">
        {readings.map((r) => (
          <div key={r.label} className="px-[10px]">
            <div className="flex h-10 items-center gap-2 text-[32px] [-webkit-text-stroke:0.8px]">
              {r.label}
              <span className="flex h-8 items-center">{r.icon}</span>
            </div>
            <div className="mt-[23px] flex h-[135px] items-center text-[56px] leading-[67px] text-[#7f858f] [-webkit-text-stroke:0.4px]">
              {r.value}
            </div>
          </div>
        ))}
      </Card>

      <Card className="h-[688px] pt-[38px]">
        <div className="flex h-10 items-center gap-2 text-[32px] [-webkit-text-stroke:0.6px]">
          Map
          <FaLocationDot className="h-8 w-6" />
        </div>
        <div className="relative mt-9 h-[400px] overflow-hidden rounded-[30px]">
          <MapArtwork />
          <MapPin />
          <MapboxWordmark />
          <div className="absolute right-0 bottom-0 flex h-10 w-[524px] items-center justify-center gap-[11px] bg-white/50 text-2xl whitespace-nowrap text-[#2b2f33]">
            <span>© Mapbox © OpenStreetMap</span>
            <span>Improve this map</span>
          </div>
        </div>
        <p className="mt-[92px] text-center text-[28px] leading-10 [-webkit-text-stroke:0.3px]">
          Data provided by{' '}
          <a className="relative top-0.5 text-[#2d6cf8] underline">OpenWeatherMap</a> and{' '}
          <a className="text-[#2d6cf8] underline">mapbox</a>
        </p>
      </Card>
    </main>
  );
}

export default function App() {
  return (
    <div className="h-[2274px] w-[3584px] overflow-hidden bg-white px-28 pt-[76px] font-['Inter']">
      <div className="relative flex h-[2050px] flex-col overflow-hidden rounded-[20px] shadow-[0_0_0_1px_#000,0_50px_90px_rgba(0,0,0,0.62)]">
        <TabStrip />
        <Toolbar />
        <BookmarksBar />
        <WeatherPage />
        <div className="pointer-events-none absolute inset-0 rounded-[20px] border-2 border-white/20" />
      </div>
    </div>
  );
}
